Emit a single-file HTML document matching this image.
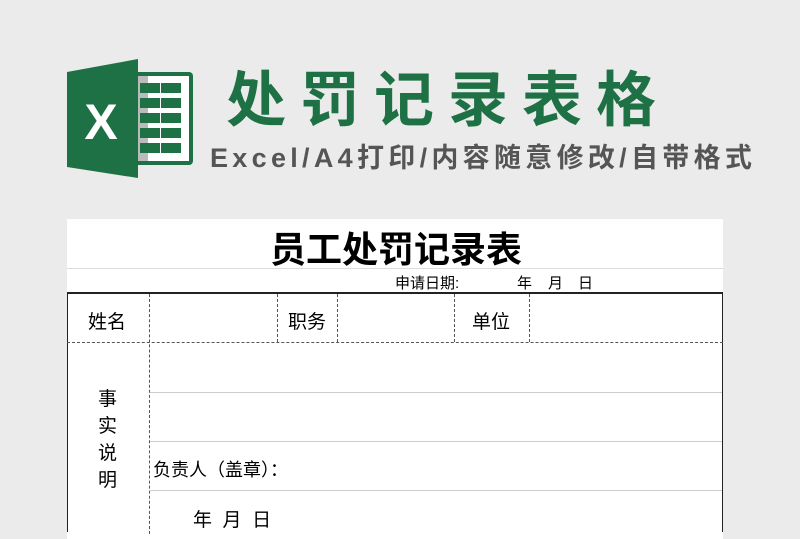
<html><head><style>
body{margin:0;width:800px;height:526px;background:#ebebeb;position:relative;overflow:hidden;font-family:"Liberation Sans","Noto Sans CJK SC",sans-serif}
.a{position:absolute}
.t{position:absolute;white-space:nowrap}
</style></head><body>
<svg class="a" style="left:0;top:0" width="800" height="200">
<rect x="132" y="72" width="61" height="93" rx="4" fill="#1e7145"/>
<rect x="136" y="76" width="53" height="85" fill="#fff"/>
<rect x="138" y="76" width="10" height="85" fill="#bbb"/>
<g fill="#1e7145">
<rect x="140" y="83" width="20" height="10"/><rect x="161" y="83" width="20" height="10"/>
<rect x="140" y="98" width="20" height="10"/><rect x="161" y="98" width="20" height="10"/>
<rect x="140" y="113" width="20" height="10"/><rect x="161" y="113" width="20" height="10"/>
<rect x="140" y="128" width="20" height="10"/><rect x="161" y="128" width="20" height="10"/>
<rect x="140" y="143" width="20" height="10"/><rect x="161" y="143" width="20" height="10"/>
</g>
<polygon points="67,72 138,59 138,178 67,167" fill="#1e7145"/>
<text x="101" y="139" font-family="Liberation Sans" font-weight="bold" font-size="50" fill="#fff" text-anchor="middle">X</text>
</svg>
<div class="t" style="left:226px;top:52px;font-size:60px;font-weight:bold;color:#1e7145;letter-spacing:14px">处罚记录表格</div>
<div class="t" style="left:210px;top:136px;font-size:27px;font-weight:bold;color:#555;letter-spacing:4.3px">Excel/A4打印/内容随意修改/自带格式</div>
<div class="a" style="left:67px;top:219px;width:656px;height:320px;background:#fff"></div>
<div class="a" style="left:67px;top:268px;width:656px;height:1px;background:#ddd"></div>
<div class="t" style="left:270px;top:221px;font-size:36px;font-weight:bold;color:#000">员工处罚记录表</div>
<div class="t" style="left:395px;top:272px;font-size:15px;color:#000">申请日期:</div>
<div class="t" style="left:517px;top:272px;font-size:15px;color:#000">年</div>
<div class="t" style="left:548px;top:272px;font-size:15px;color:#000">月</div>
<div class="t" style="left:578px;top:272px;font-size:15px;color:#000">日</div>
<div class="a" style="left:67px;top:292px;width:656px;height:240px;border-top:2px solid #222;border-left:1px solid #222;border-right:1px solid #222;box-sizing:border-box"></div>
<div class="a" style="left:67px;top:342px;width:656px;border-top:1px dashed #555"></div>
<div class="a" style="left:149px;top:294px;height:240px;border-left:1px dashed #555"></div>
<div class="a" style="left:277px;top:294px;height:48px;border-left:1px dashed #555"></div>
<div class="a" style="left:337px;top:294px;height:48px;border-left:1px dashed #555"></div>
<div class="a" style="left:454px;top:294px;height:48px;border-left:1px dashed #555"></div>
<div class="a" style="left:529px;top:294px;height:48px;border-left:1px dashed #555"></div>
<div class="a" style="left:150px;top:392px;width:572px;height:1px;background:#ccc"></div>
<div class="a" style="left:150px;top:441px;width:572px;height:1px;background:#ccc"></div>
<div class="a" style="left:150px;top:490px;width:572px;height:1px;background:#ccc"></div>
<div class="t" style="left:88px;top:307px;font-size:19px">姓名</div>
<div class="t" style="left:288px;top:307px;font-size:19px">职务</div>
<div class="t" style="left:472px;top:307px;font-size:19px">单位</div>
<div class="t" style="left:98px;top:386px;font-size:19px;line-height:27px;white-space:normal;width:20px">事实说明</div>
<div class="t" style="left:153px;top:456px;font-size:18px">负责人（盖章）：</div>
<div class="t" style="left:193px;top:505px;font-size:19px">年&nbsp;&nbsp;月&nbsp;&nbsp;日</div>
</body></html>
